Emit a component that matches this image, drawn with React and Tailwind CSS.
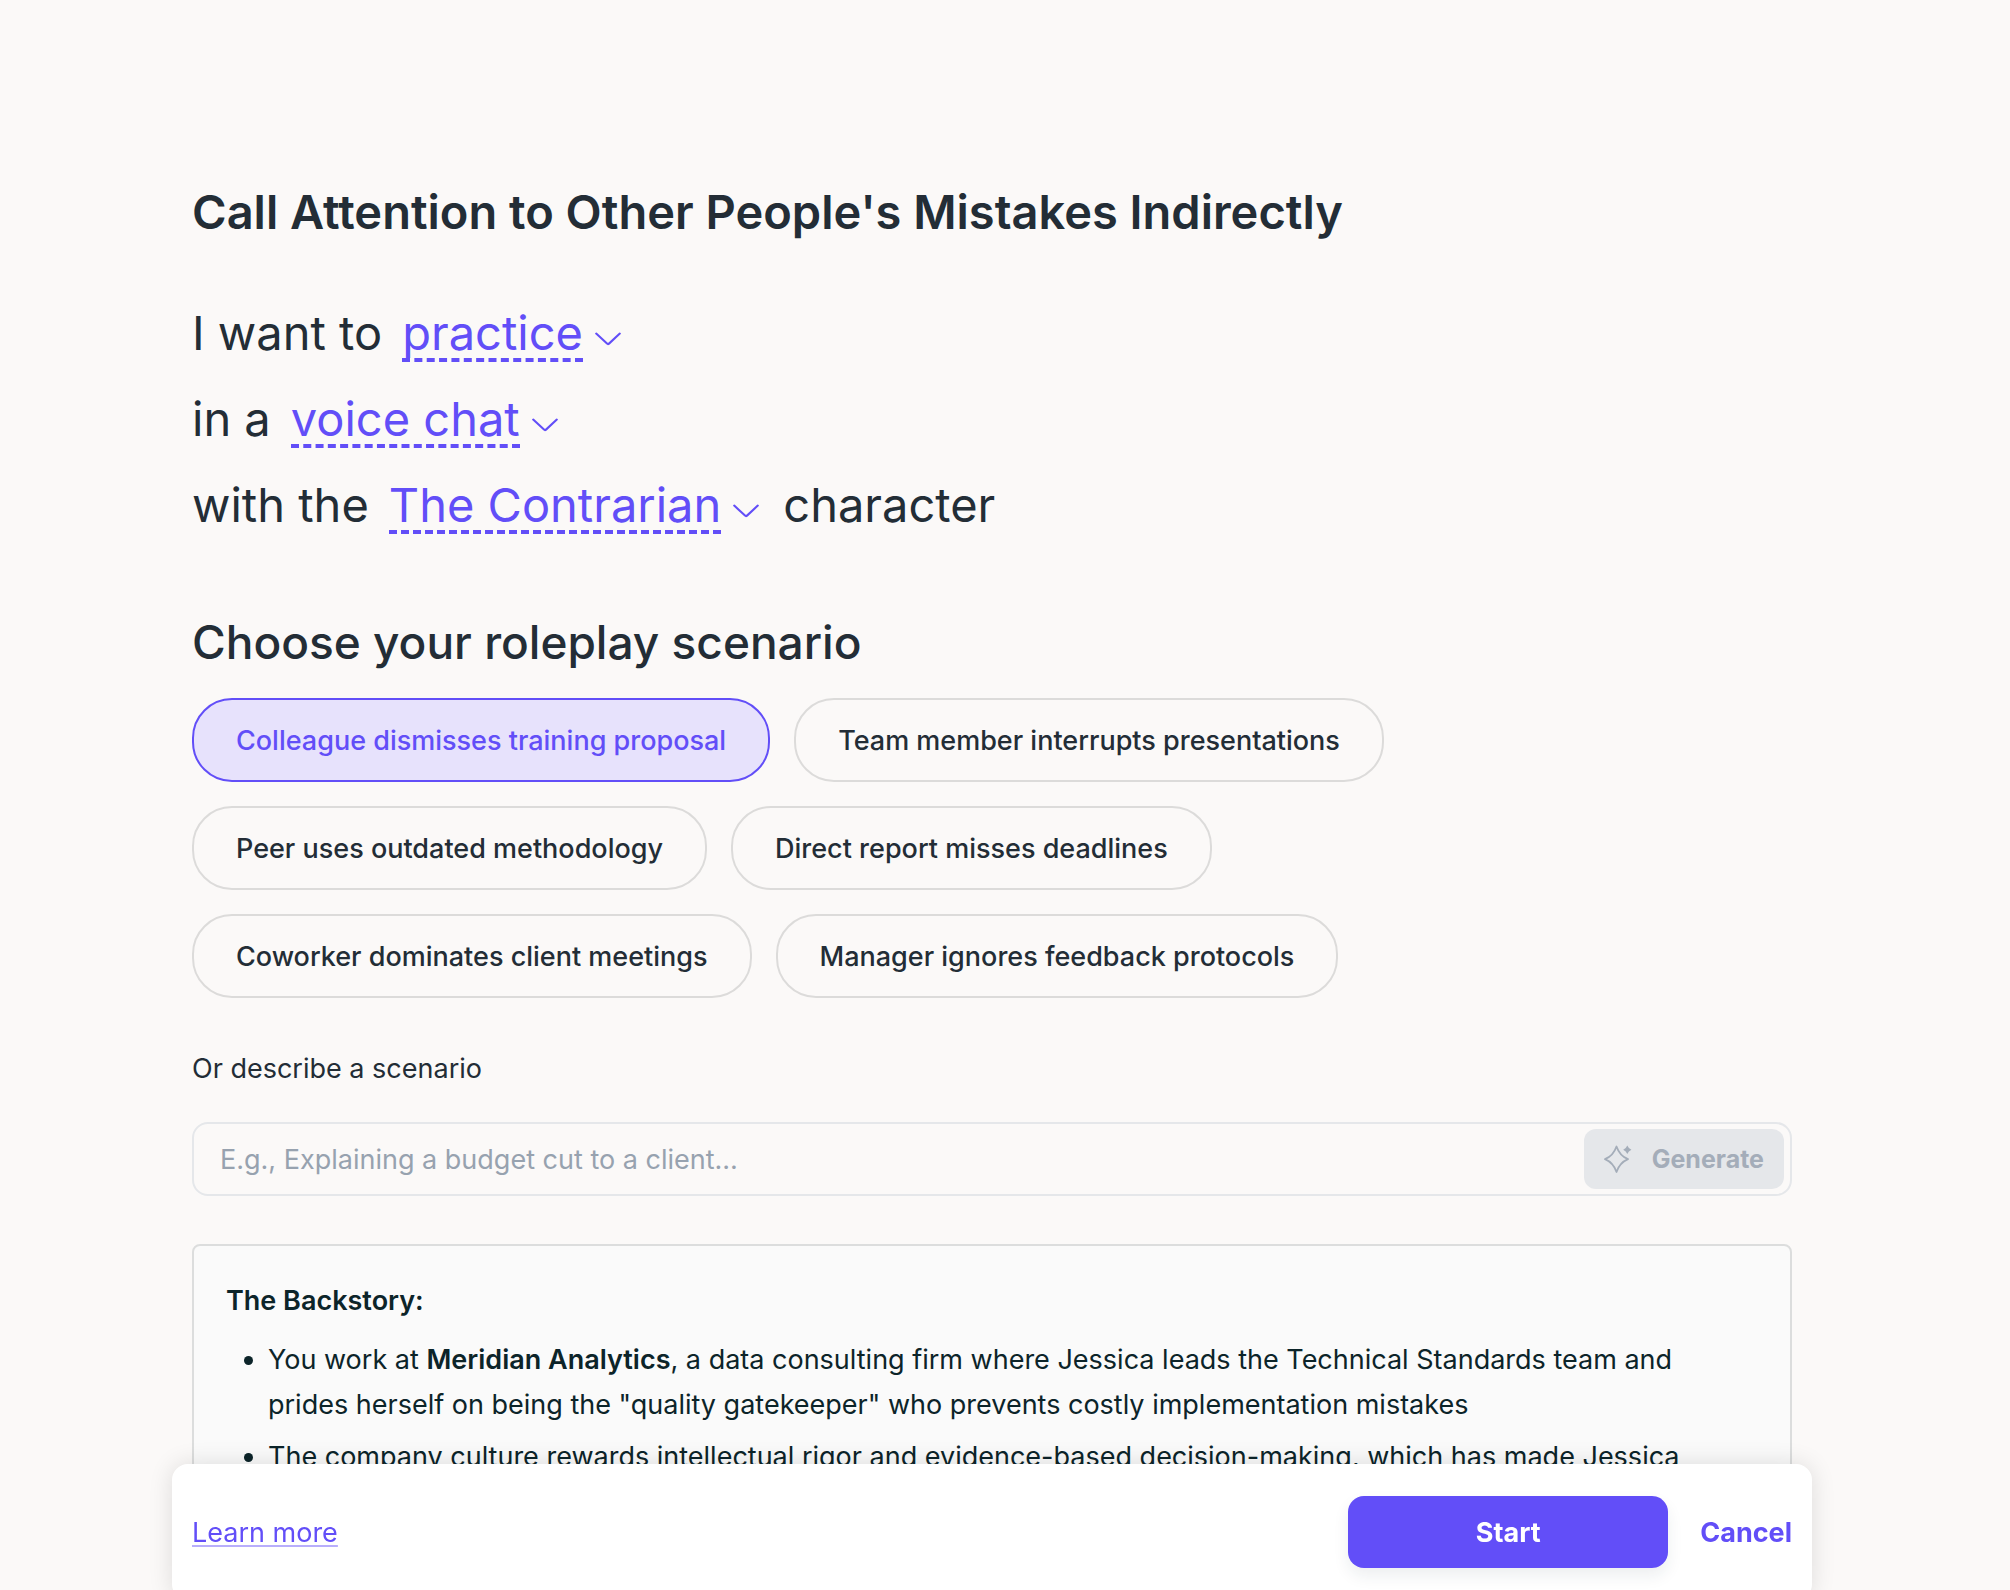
import { useState } from "react";

const scenarios = [
  "Colleague dismisses training proposal",
  "Team member interrupts presentations",
  "Peer uses outdated methodology",
  "Direct report misses deadlines",
  "Coworker dominates client meetings",
  "Manager ignores feedback protocols",
];

const ChevronIcon = () => (
  <svg viewBox="0 0 26 14" className="pointer-events-none mt-2 h-3.5 w-[26px] shrink-0" fill="none" stroke="currentColor" strokeWidth="2.1" strokeLinecap="round" strokeLinejoin="round" aria-hidden="true">
    <path d="M1.2 1.6 12 11.6a1.5 1.5 0 0 0 2 0L24.8 1.6" />
  </svg>
);

const SparkleIcon = () => (
  <svg viewBox="0 0 28 28" className="h-7 w-7 shrink-0" fill="none" aria-hidden="true">
    <path d="M12.5 1.5C14.6 7.6 18 11.8 24 14.2 18 16.8 14.6 20.8 12.5 27 10.4 20.8 7 16.8 1 14.2 7 11.8 10.4 7.6 12.5 1.5Z" stroke="currentColor" strokeWidth="1.8" strokeLinejoin="round" />
    <path d="M23.3.5 24.9 3 27.4 4.7 24.9 6.4 23.3 9 21.7 6.4 19.2 4.7 21.7 3Z" fill="currentColor" />
  </svg>
);

const InlineSelect = ({ label, options }) => (
  <span className="flex items-center gap-3 text-[#624ef8]">
    <select
      aria-label={label}
      className="h-[54px] cursor-pointer appearance-none field-sizing-content border-b-4 border-dashed border-[#624ef8] bg-transparent text-[47px] leading-[50px] outline-none"
    >
      {options.map((option) => (
        <option key={option}>{option}</option>
      ))}
    </select>
    <ChevronIcon />
  </span>
);

const App = () => {
  const [selected, setSelected] = useState(scenarios[0]);
  const [description, setDescription] = useState("");

  return (
    <div className="h-screen overflow-y-auto bg-[#fbf9f8] pr-[26px] font-['Inter',sans-serif] text-[27px] leading-[45px] text-[#232d36] [scrollbar-width:none]">
      <main className="mx-auto max-w-[1600px] pt-[180px] pb-48">
        <h1 className="text-[47px] leading-[64px] font-semibold">Call Attention to Other People's Mistakes Indirectly</h1>

        <div className="mt-12 text-[47px] leading-[48px]">
          <div className="flex h-[86px] items-center gap-5">
            <span className="pb-1">I want to</span>
            <InlineSelect label="Activity" options={["practice"]} />
          </div>
          <div className="flex h-[86px] items-center gap-5">
            <span className="pb-1">in a</span>
            <InlineSelect label="Format" options={["voice chat"]} />
          </div>
          <div className="flex h-[86px] items-center gap-5">
            <span className="pb-1">with the</span>
            <InlineSelect label="Character" options={["The Contrarian"]} />
            <span className="pb-1 pl-1">character</span>
          </div>
        </div>

        <h2 className="mt-[60px] text-[46px] leading-[64px] font-medium">Choose your roleplay scenario</h2>

        <div className="mt-6 flex max-w-[1400px] flex-wrap gap-6">
          {scenarios.map((scenario) => (
            <button
              key={scenario}
              type="button"
              aria-pressed={selected === scenario}
              onClick={() => setSelected(scenario)}
              className={`h-[84px] rounded-[40px] border-2 px-[42px] font-medium ${
                selected === scenario ? "border-[#624ef8] bg-[#e7e2fc] text-[#624ef8]" : "border-[#dcdbda]"
              }`}
            >
              {scenario}
            </button>
          ))}
        </div>

        <label htmlFor="description" className="mt-12 block">Or describe a scenario</label>
        <div className="mt-[31px] flex h-[74px] items-center rounded-2xl border-2 border-[#e5e7ea] pr-1.5">
          <input
            id="description"
            type="text"
            value={description}
            onChange={(e) => setDescription(e.target.value)}
            placeholder="E.g., Explaining a budget cut to a client..."
            className="min-w-0 flex-1 bg-transparent px-[26px] outline-none placeholder:text-[#97a2af]"
          />
          <button
            type="button"
            disabled={!description}
            className="flex h-[60px] w-[200px] items-center justify-between rounded-xl bg-[#e5e7ea] px-5 text-[25px] font-bold text-[#a4adb9]"
          >
            <SparkleIcon />
            Generate
          </button>
        </div>

        <section className="mt-12 rounded-lg border-2 border-[#dcdddd] bg-[#fafafa] px-8 py-8 text-[#0c2429]">
          <h3 className="font-semibold">The Backstory:</h3>
          <ul className="mt-3.5 list-disc space-y-[7px] pr-6 pl-[42px]">
            <li>
              You work at <strong className="font-semibold">Meridian Analytics</strong>, a data consulting firm where Jessica leads the Technical Standards team and prides herself on being the "quality gatekeeper" who prevents costly implementation mistakes
            </li>
            <li>The company culture rewards intellectual rigor and evidence-based decision-making, which has made Jessica</li>
          </ul>
        </section>
      </main>

      <footer className="fixed inset-x-0 -bottom-2.5 pr-[26px]">
        <div className="mx-auto flex max-w-[1640px] items-center gap-8 rounded-2xl bg-white px-5 py-8 text-[#624ef8] shadow-[0_0_24px_rgba(0,0,0,0.12)]">
          <a href="#" className="mr-auto underline decoration-[#b8aefb] decoration-2 underline-offset-[3px]">Learn more</a>
          <button type="button" className="h-[72px] w-80 rounded-2xl bg-[#624ef8] font-bold text-white shadow-[0_8px_16px_rgba(20,50,60,0.08)]">Start</button>
          <button type="button" className="font-bold">Cancel</button>
        </div>
      </footer>
    </div>
  );
};

export default App;
